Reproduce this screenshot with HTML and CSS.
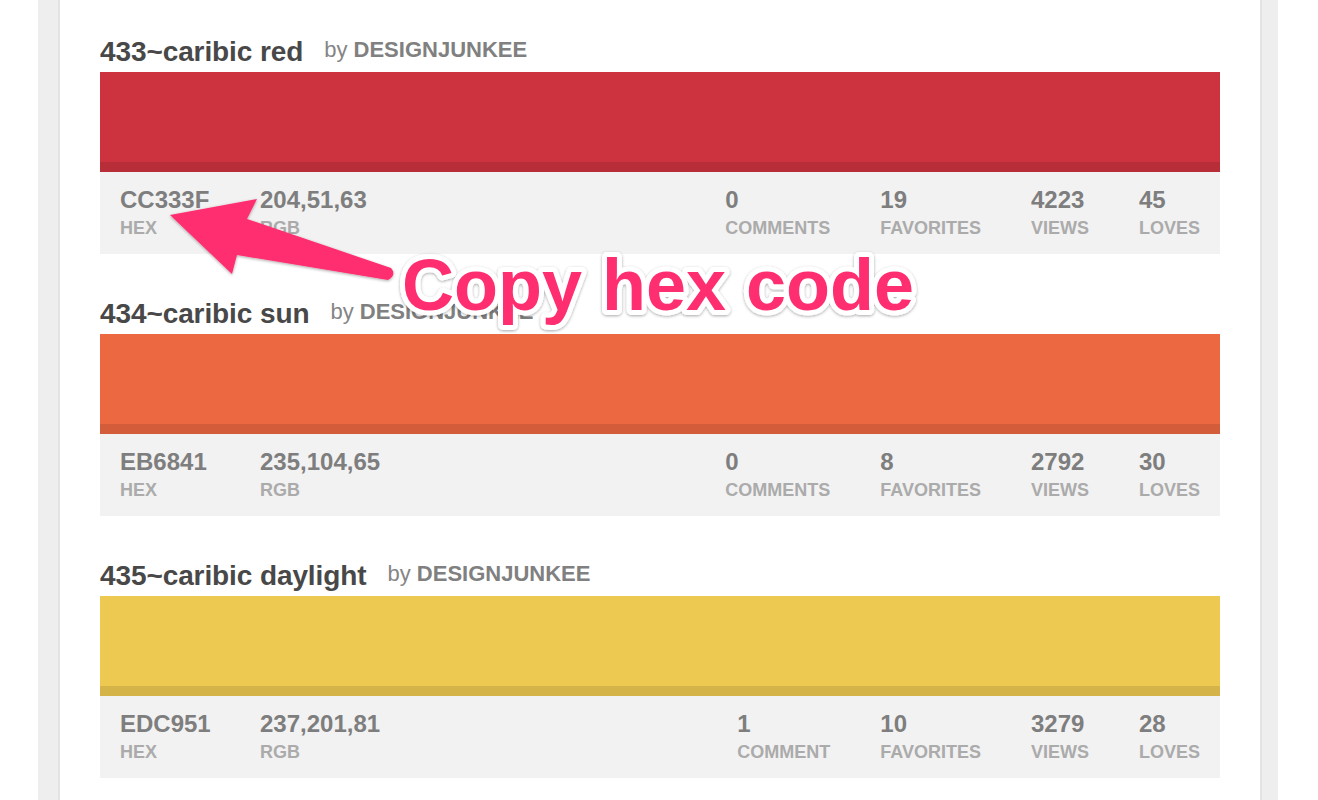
FILE: index.html
```html
<!DOCTYPE html>
<html>
<head>
<meta charset="utf-8">
<link rel="stylesheet" href="styles.css">
</head>
<body>
<div class="page">
  <div class="sheet">
    <section class="color">
      <div class="head"><h2 class="name">433~caribic red</h2><span class="by">by <b>DESIGNJUNKEE</b></span></div>
      <div class="swatch red"></div>
      <div class="info">
        <div class="cell hex"><div class="num">CC333F</div><div class="lbl">HEX</div></div>
        <div class="cell"><div class="num">204,51,63</div><div class="lbl">RGB</div></div>
        <div class="stats">
          <div class="cell"><div class="num">0</div><div class="lbl">COMMENTS</div></div>
          <div class="cell"><div class="num">19</div><div class="lbl">FAVORITES</div></div>
          <div class="cell"><div class="num">4223</div><div class="lbl">VIEWS</div></div>
          <div class="cell"><div class="num">45</div><div class="lbl">LOVES</div></div>
        </div>
      </div>
    </section>
    <section class="color">
      <div class="head"><h2 class="name">434~caribic sun</h2><span class="by">by <b>DESIGNJUNKEE</b></span></div>
      <div class="swatch orange"></div>
      <div class="info">
        <div class="cell hex"><div class="num">EB6841</div><div class="lbl">HEX</div></div>
        <div class="cell"><div class="num">235,104,65</div><div class="lbl">RGB</div></div>
        <div class="stats">
          <div class="cell"><div class="num">0</div><div class="lbl">COMMENTS</div></div>
          <div class="cell"><div class="num">8</div><div class="lbl">FAVORITES</div></div>
          <div class="cell"><div class="num">2792</div><div class="lbl">VIEWS</div></div>
          <div class="cell"><div class="num">30</div><div class="lbl">LOVES</div></div>
        </div>
      </div>
    </section>
    <section class="color">
      <div class="head"><h2 class="name">435~caribic daylight</h2><span class="by">by <b>DESIGNJUNKEE</b></span></div>
      <div class="swatch yellow"></div>
      <div class="info">
        <div class="cell hex"><div class="num">EDC951</div><div class="lbl">HEX</div></div>
        <div class="cell"><div class="num">237,201,81</div><div class="lbl">RGB</div></div>
        <div class="stats">
          <div class="cell"><div class="num">1</div><div class="lbl">COMMENT</div></div>
          <div class="cell"><div class="num">10</div><div class="lbl">FAVORITES</div></div>
          <div class="cell"><div class="num">3279</div><div class="lbl">VIEWS</div></div>
          <div class="cell"><div class="num">28</div><div class="lbl">LOVES</div></div>
        </div>
      </div>
    </section>
  </div>
</div>
<svg class="annotation" width="1318" height="800" viewBox="0 0 1318 800" xmlns="http://www.w3.org/2000/svg">
  <defs>
    <filter id="sh" x="-10%" y="-20%" width="120%" height="140%">
      <feDropShadow dx="0" dy="1" stdDeviation="1.5" flood-color="#000" flood-opacity="0.35"/>
    </filter>
  </defs>
  <path class="arrow" filter="url(#sh)" d="M170,215 L257,199 L247,219 L391,268 Q397,275 388,280 L237,255 L232,274 Z"/>
  <text class="callout" x="402" y="310" filter="url(#sh)">Copy hex code</text>
</svg>
</body>
</html>
```

FILE: styles.css
```css
html, body {
  margin: 0;
  padding: 0;
  background: #ffffff;
}
body {
  position: relative;
  font-family: "Liberation Sans", Arial, sans-serif;
  overflow: hidden;
  height: 800px;
}
.page {
  margin-left: 38px;
  width: 1240px;
  background: #eeeeee;
  padding: 0 16px 0 20px;
  box-sizing: border-box;
}
.sheet {
  background: #ffffff;
  border-left: 2px solid #e3e3e3;
  border-right: 2px solid #e3e3e3;
  padding: 32px 40px 40px;
}
.color + .color {
  margin-top: 40px;
}
.head {
  display: flex;
  align-items: flex-start;
  gap: 21px;
  height: 40px;
}
.name {
  margin: 0;
  font-size: 28px;
  line-height: 40px;
  font-weight: bold;
  color: #484848;
  letter-spacing: -0.1px;
}
.by {
  font-size: 22px;
  line-height: 36px;
  color: #858585;
}
.by b {
  color: #808080;
}
.swatch {
  height: 100px;
  box-shadow: inset 0 -10px 0 rgba(0, 0, 0, 0.1);
}
.red { background: #CC333F; }
.orange { background: #EB6841; }
.yellow { background: #EDC951; }
.info {
  display: flex;
  background: #f2f2f2;
  padding: 14px 20px 15px;
}
.cell.hex {
  width: 140px;
}
.stats {
  margin-left: auto;
  display: flex;
  gap: 50px;
}
.num {
  font-size: 24px;
  line-height: 28px;
  font-weight: bold;
  color: #7e7e7e;
}
.lbl {
  margin-top: 3px;
  font-size: 18px;
  line-height: 22px;
  font-weight: bold;
  color: #ababab;
}
.annotation {
  position: absolute;
  left: 0;
  top: 0;
  pointer-events: none;
}
.arrow {
  fill: #ff2e6f;
}
.callout {
  font-family: "Liberation Sans", Arial, sans-serif;
  font-size: 72px;
  font-weight: bold;
  fill: #ff2e6f;
  stroke: #ffffff;
  stroke-width: 10px;
  stroke-linejoin: round;
  paint-order: stroke fill;
}
```
